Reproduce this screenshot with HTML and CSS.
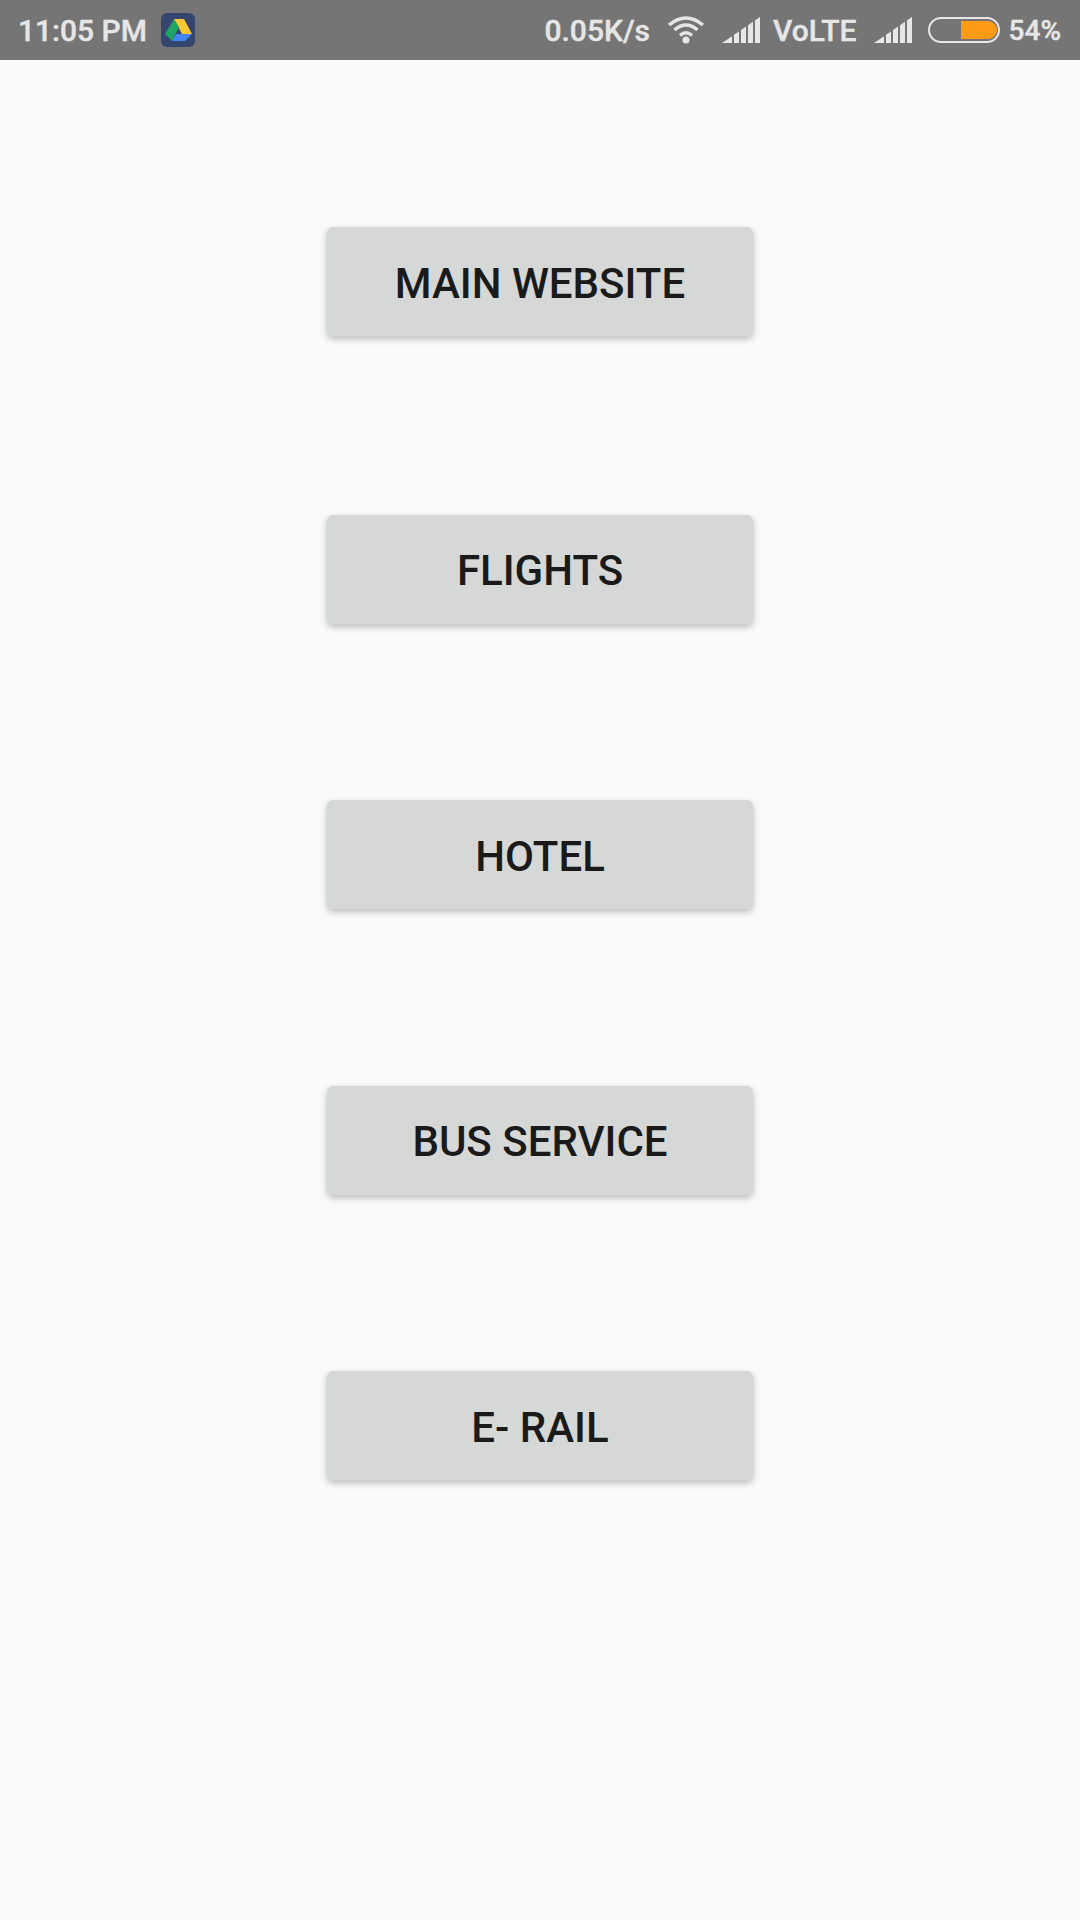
FILE: index.html
```html
<!DOCTYPE html>
<html lang="en">

<head>
    <meta charset="UTF-8">
    <title>Travel</title>
    <link rel="stylesheet" href="styles.css">
</head>

<body>
    <div class="status">
        <div class="status-left">
            <span class="time">11:05 PM</span>
            <svg class="drive" width="34" height="34" viewBox="0 0 34 34">
                <rect width="34" height="34" rx="6" fill="#34466f"/>
                <path d="M13 6h10l8 15H21z" fill="#fcc934"/>
                <path d="M13 6l5 8-7 14-7-7z" fill="#1fa463"/>
                <path d="M15 21h16l-7 7H11z" fill="#4285f4"/>
            </svg>
        </div>
        <div class="status-right">
            <span class="speed">0.05K/s</span>
            <svg class="wifi" width="38" height="28" viewBox="0 0 38 28" fill="none" stroke="#e6e6e6" stroke-width="3.5">
                <path d="M2 9Q19 -5 36 9"/>
                <path d="M7.500 14Q19 4 30.500 14"/>
                <path d="M13 19.500Q19 14 25 19.500"/>
                <circle cx="19" cy="24" r="3.500" fill="#e6e6e6" stroke="none"/>
            </svg>
            <svg class="signal" width="38" height="26" viewBox="0 0 38 26" fill="#e6e6e6">
                <path d="M0 26L10 19.200V26z"/>
                <path d="M12 17.800L17 14.400V26H12z"/>
                <path d="M19 13L24 9.600V26H19z"/>
                <path d="M26 8.200L31 4.800V26H26z"/>
                <path d="M33 3.400L38 0V26H33z"/>
            </svg>
            <span class="volte">VoLTE</span>
            <svg class="signal" width="38" height="26" viewBox="0 0 38 26" fill="#e6e6e6">
                <path d="M0 26L10 19.200V26z"/>
                <path d="M12 17.800L17 14.400V26H12z"/>
                <path d="M19 13L24 9.600V26H19z"/>
                <path d="M26 8.200L31 4.800V26H26z"/>
                <path d="M33 3.400L38 0V26H33z"/>
            </svg>
            <svg class="battery" width="72" height="26" viewBox="0 0 72 26">
                <rect x="1" y="1" width="70" height="24" rx="12" fill="none" stroke="#e6e6e6" stroke-width="2"/>
                <path d="M33 4h27a9 9 0 0 1 0 18H33z" fill="#ff9a16"/>
            </svg>
            <span class="percent">54%</span>
        </div>
    </div>

    <div class="menu">
        <button class="btn">MAIN WEBSITE</button>
        <button class="btn">FLIGHTS</button>
        <button class="btn">HOTEL</button>
        <button class="btn">BUS SERVICE</button>
        <button class="btn">E- RAIL</button>
    </div>
</body>

</html>
```

FILE: styles.css
```css
* {
    margin: 0;
    padding: 0;
    box-sizing: border-box;
}

body {
    width: 1080px;
    height: 1920px;
    background: #fafafa;
    font-family: Roboto, "Liberation Sans", sans-serif;
    overflow: hidden;
}

.status {
    height: 60px;
    background: #757575;
    color: #e6e6e6;
    font-size: 30px;
    font-weight: 500;
    -webkit-text-stroke: 0.4px #e6e6e6;
    display: flex;
    justify-content: space-between;
    align-items: center;
    padding: 0 19px 0 18px;
}

.status-left,
.status-right {
    display: flex;
    align-items: center;
}

.drive {
    margin-left: 14px;
}

.wifi {
    margin-left: 17px;
}

.signal {
    margin-left: 17px;
}

.volte {
    margin-left: 13px;
}

.battery {
    margin-left: 16px;
}

.percent {
    margin-left: 9px;
    font-size: 28px;
}

.menu {
    display: flex;
    flex-direction: column;
    align-items: center;
    gap: 176.4px;
    padding-top: 167px;
}

.btn {
    width: 426px;
    height: 109px;
    padding-top: 3px;
    border: none;
    border-radius: 6px;
    background: #d6d7d7;
    color: #1a1a1a;
    font-family: inherit;
    font-size: 42px;
    font-weight: 500;
    box-shadow: 0 3px 7px rgba(0, 0, 0, 0.25);
}

.btn:first-child {
    margin-bottom: 2.600px;
}
```
